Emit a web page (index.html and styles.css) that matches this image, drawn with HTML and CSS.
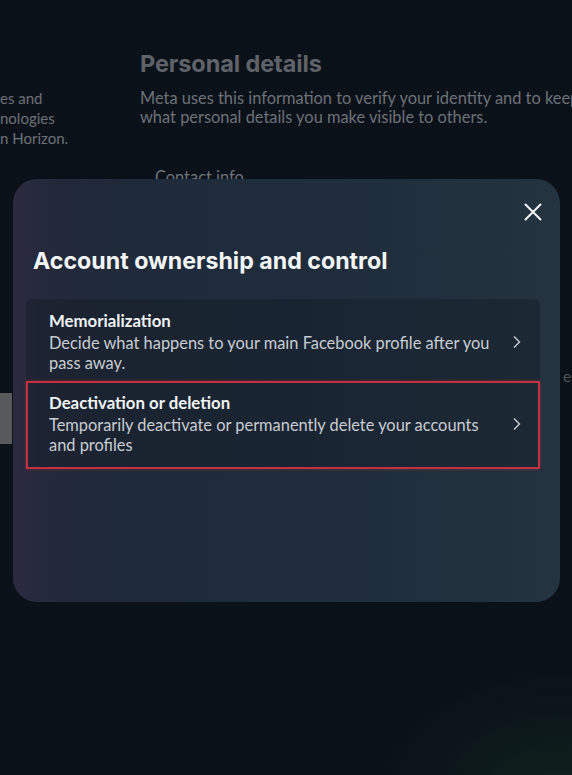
FILE: index.html
```html
<!DOCTYPE html>
<html lang="en">
<head>
<meta charset="utf-8">
<title>Account ownership and control</title>
<link rel="stylesheet" href="styles.css">
</head>
<body>
<div class="page">
  <aside class="side">
    <div class="side-text">
      <div>es and</div>
      <div>nologies</div>
      <div>n Horizon.</div>
    </div>
    <div class="side-btn"></div>
  </aside>
  <main class="main">
    <h2 class="main-title">Personal details</h2>
    <p class="main-desc">Meta uses this information to verify your identity and to keep<br>what personal details you make visible to others.</p>
    <div class="main-row">Contact info</div>
    <div class="main-edge">e</div>
  </main>
</div>

<div class="modal" role="dialog" aria-labelledby="modal-title">
  <button class="close" aria-label="Close">
    <svg viewBox="0 0 18 18" width="18" height="18"><path d="M1.5 1.5 L16.5 16.5 M16.5 1.5 L1.5 16.5" stroke="#f2f4f6" stroke-width="2" stroke-linecap="round" fill="none"/></svg>
  </button>
  <h1 id="modal-title" class="modal-title">Account ownership and control</h1>
  <div class="list">
    <a class="item item-first">
      <div class="item-text">
        <div class="item-title">Memorialization</div>
        <div class="item-desc">Decide what happens to your main Facebook profile after you pass away.</div>
      </div>
      <svg class="chev" viewBox="0 0 8 14" width="8" height="14"><path d="M1 1.5 L6.5 7 L1 12.5" stroke="#c9cdd2" stroke-width="1.4" fill="none"/></svg>
    </a>
    <a class="item item-hl">
      <div class="item-text">
        <div class="item-title">Deactivation or deletion</div>
        <div class="item-desc">Temporarily deactivate or permanently delete your accounts and profiles</div>
      </div>
      <svg class="chev" viewBox="0 0 8 14" width="8" height="14"><path d="M1 1.5 L6.5 7 L1 12.5" stroke="#c9cdd2" stroke-width="1.4" fill="none"/></svg>
    </a>
  </div>
</div>
</body>
</html>
```

FILE: styles.css
```css
html, body {
  margin: 0;
  padding: 0;
}
body {
  width: 572px;
  height: 775px;
  overflow: hidden;
  background:
    radial-gradient(ellipse 180px 120px at 560px 790px, rgba(20, 50, 35, 0.5), rgba(20, 50, 35, 0) 100%),
    #0b1119;
  font-family: Lato, "Open Sans", sans-serif;
  position: relative;
}

.page {
  display: flex;
  height: 775px;
}

.side {
  width: 140px;
  flex: none;
  display: flex;
  flex-direction: column;
}
.side-text {
  margin-top: 88px;
  color: #6d7278;
  font-size: 15px;
  line-height: 20px;
}
.side-btn {
  margin-top: 245px;
  width: 12px;
  height: 51px;
  background: #58595b;
}

.main {
  flex: 1;
  min-width: 0;
  display: flex;
  flex-direction: column;
  color: #6d7278;
}
.main-title {
  margin: 49px 0 0;
  font-family: Inter, sans-serif;
  font-weight: 700;
  font-size: 23.5px;
  line-height: 30px;
  letter-spacing: -0.1px;
  color: #5f6369;
}
.main-desc {
  margin: 9px 0 0;
  font-size: 16.4px;
  line-height: 19px;
  white-space: nowrap;
}
.main-row {
  margin: 41px 0 0 15px;
  font-size: 16.4px;
  line-height: 20px;
}
.main-edge {
  margin: 179px 0 0 423px;
  font-size: 16px;
  color: #4c5157;
}

.modal {
  position: absolute;
  left: 13px;
  top: 179px;
  width: 547px;
  height: 423px;
  box-sizing: border-box;
  border-radius: 24px;
  background:
    linear-gradient(90deg, rgba(52, 42, 66, 0.55) 0%, rgba(40, 40, 60, 0.25) 8%, rgba(30, 44, 60, 0) 25%),
    linear-gradient(90deg, #202a39 0%, #1e2c3b 50%, #23333f 100%);
  padding: 66px 20px 0 13px;
}
.close {
  position: absolute;
  top: 23px;
  right: 17px;
  width: 20px;
  height: 20px;
  padding: 0;
  border: 0;
  background: transparent;
  display: flex;
  align-items: center;
  justify-content: center;
}
.modal-title {
  margin: 0 0 0 7px;
  font-family: Inter, sans-serif;
  font-weight: 700;
  font-size: 23.2px;
  line-height: 32px;
  letter-spacing: 0;
  color: #f3f5f7;
}
.list {
  margin-top: 22px;
  background: rgba(16, 24, 33, 0.35);
  border-radius: 6px;
  display: flex;
  flex-direction: column;
}
.item {
  display: flex;
  align-items: center;
  gap: 14px;
  padding: 10px 17px 12px 21px;
  border: 2px solid transparent;
}
.item-first {
  padding-top: 10px;
  padding-bottom: 6px;
}
.item-hl {
  border-color: #c3303f;
  box-shadow: 0 0 3px rgba(195, 48, 63, 0.5);
}
.item-text {
  flex: 1;
}
.item-title {
  font-weight: 700;
  font-size: 16.8px;
  line-height: 20px;
  color: #f2f4f6;
}
.item-desc {
  margin-top: 2px;
  font-size: 16.4px;
  line-height: 20px;
  color: #c9cdd2;
}
.chev {
  flex: none;
}
```
